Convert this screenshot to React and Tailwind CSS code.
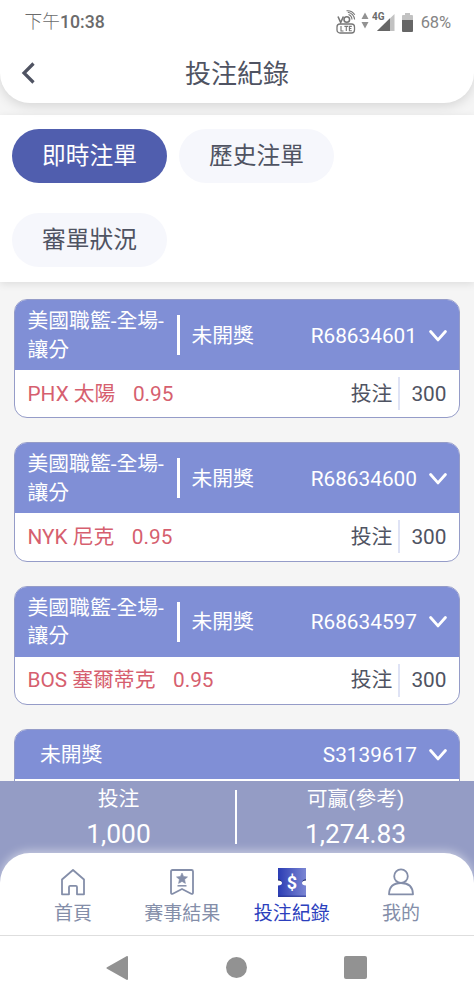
import React from 'react';

const tabs = [
  { label: '即時注單', active: true },
  { label: '歷史注單', active: false },
  { label: '審單狀況', active: false },
];

const bets = [
  { id: 'R68634601', game: '美國職籃-全場-讓分', team: 'PHX 太陽', odds: '0.95', stake: 300 },
  { id: 'R68634600', game: '美國職籃-全場-讓分', team: 'NYK 尼克', odds: '0.95', stake: 300 },
  { id: 'R68634597', game: '美國職籃-全場-讓分', team: 'BOS 塞爾蒂克', odds: '0.95', stake: 300 },
];

const Chevron = () => (
  <svg width="18" height="13" viewBox="0 0 18 13" fill="none" stroke="#fff" strokeWidth="2.8" strokeLinecap="round" strokeLinejoin="round">
    <path d="M1.6 2.500 9 10.900 16.400 2.500" />
  </svg>
);

const StatusBar = () => (
  <div className="flex h-[44px] items-center justify-between pl-[24.500px] pr-[23px] text-[#6b6b6b]">
    <span className="pt-px text-[17.700px] leading-none font-medium">
      <span className="font-light">下午</span>10:38
    </span>
    <div className="flex items-center">
      <svg width="20" height="25" viewBox="0 0 20 25" className="mr-[5px]" fill="none" stroke="#777">
        <path d="M2 6.500 4.700 12.500 7.400 6.500" strokeWidth="1.6" />
        <circle cx="10.800" cy="9.500" r="2.800" strokeWidth="1.6" />
        <path d="M12.500 4.500q3.300 1.200 3.500 5M11.800 2.300q6 1.200 6.800 7.200M10.500.8q5.500-.5 8.300 4" strokeWidth="1.1" />
        <rect x="1" y="14" width="17.500" height="9" rx="3" strokeWidth="1.300" />
        <path d="M5 16v5h2.500M8.400 16.400h3.800M10.300 16v5M15.800 16.400h-2.400v4.300h2.400M13.400 18.500h2" strokeWidth="1.1" />
      </svg>
      <svg width="8" height="17" viewBox="0 0 8 17" className="mr-[3px] mb-[3px]" fill="#929292">
        <path d="M4 .5 7.500 7H.5zM4 16.500.5 10h7z" />
      </svg>
      <svg width="24" height="22" viewBox="0 0 24 22" className="mr-[6px]">
        <path d="M22.500 3v17H5z" fill="#c2c2c2" />
        <path d="M18 7.300V20H5z" fill="#666" />
        <text x="0" y="9" fontSize="10" fontWeight="700" fill="#6b6b6b" stroke="#fff" strokeWidth="1.500" paintOrder="stroke">4G</text>
      </svg>
      <svg width="11" height="19" viewBox="0 0 11 19" className="mr-[8px]">
        <path d="M3 0h5v2h2q1 0 1 1v5H0V3q0-1 1-1h2z" fill="#c2c2c2" />
        <path d="M0 7h11v11q0 1-1 1H1q-1 0-1-1z" fill="#666" />
      </svg>
      <span className="pt-[2px] text-[16.500px] leading-none tracking-[-0.1px] text-[#858585]">68%</span>
    </div>
  </div>
);

const BetCard = ({ bet }) => (
  <div className="h-[119.200px] shrink-0 overflow-hidden rounded-[13px] border border-[#959cc8] bg-white">
    <div className="flex h-[70px] items-center bg-[#808fd6] pl-[12.500px] pr-[12.500px] text-white">
      <div className="w-[140px] pt-px leading-[28.500px] break-all">{bet.game}</div>
      <div className="ml-[9px] h-10 w-[3px] bg-white" />
      <span className="ml-[12px] pt-[2px]">未開獎</span>
      <span className="ml-auto mr-[11.500px] pt-[2px]">{bet.id}</span>
      <Chevron />
    </div>
    <div className="flex h-[47.200px] items-center pl-[12.500px] pr-[12.500px]">
      <span className="pt-px text-[#d65f6f]">{bet.team}</span>
      <span className="ml-[17.500px] pt-px text-[#d65f6f]">{bet.odds}</span>
      <span className="ml-auto pt-px">投注</span>
      <div className="mr-[11px] ml-[6px] h-[33px] w-[2px] bg-[#dfe3f5]" />
      <span className="pt-px">{bet.stake}</span>
    </div>
  </div>
);

const HomeIcon = () => (
  <svg width="26" height="28" viewBox="0 0 26 28" fill="none" stroke="#848ea9" strokeWidth="1.8" strokeLinejoin="round">
    <path d="M2 11.500 13 2l11 9.500V26.300h-7V19q0-1.200-1.200-1.200h-5.600Q9 17.800 9 19v7.300H2z" />
  </svg>
);

const ResultIcon = () => (
  <svg width="26" height="28" viewBox="0 0 26 28" fill="none" stroke="#848ea9" strokeWidth="1.8" strokeLinejoin="round">
    <path d="M3.500 2h19q1.500 0 1.500 1.500v21q0 2-1.800 1.200L13 21l-9.200 4.700Q2 26.500 2 24.500v-21Q2 2 3.500 2z" />
    <path d="m13 5 1.600 3.500 3.900.4-2.900 2.600.8 3.900-3.400-2-3.400 2 .8-3.900-2.900-2.600 3.900-.4z" fill="#848ea9" strokeWidth=".6" />
    <path d="M8.500 17.800h9" strokeWidth="1.500" />
  </svg>
);

const TicketIcon = () => (
  <svg width="28" height="30" viewBox="0 0 28 30">
    <defs>
      <linearGradient id="ticket" x1="0" x2="1" y1="0" y2="0">
        <stop offset="0" stopColor="#2b3db4" />
        <stop offset="1" stopColor="#7b86d3" />
      </linearGradient>
    </defs>
    <path d="M0 0h28v29H0z" fill="url(#ticket)" />
    <path d="M0 27.500h28V29H0z" fill="#26348f" opacity=".6" />
    <path d="M0 11.300q3 0 4 3.200H0zM28 11.300q-3 0-4 3.200h4z" fill="#222c68" />
    <path d="M0 12.500q4 .3 4 2.500t-4 2.500zM28 12.500q-4 .3-4 2.500t4 2.500z" fill="#fff" />
    <text x="14" y="20.500" textAnchor="middle" fontSize="18" fontWeight="700" fill="#fff">$</text>
  </svg>
);

const UserIcon = () => (
  <svg width="26" height="28" viewBox="0 0 26 28" fill="none" stroke="#848ea9" strokeWidth="1.8" strokeLinejoin="round">
    <circle cx="13" cy="8.200" r="6.800" />
    <path d="M1 26.300q.3-11.300 12-11.300t12 11.300z" />
  </svg>
);

const navItems = [
  { label: '首頁', Icon: HomeIcon },
  { label: '賽事結果', Icon: ResultIcon },
  { label: '投注紀錄', Icon: TicketIcon, active: true },
  { label: '我的', Icon: UserIcon },
];

const App = () => {
  return (
    <div className="flex h-[1000px] w-full flex-col overflow-hidden bg-[#f5f5f5] font-['Roboto','Noto_Sans_CJK_TC',sans-serif] text-[20.800px] leading-none text-[#4f5362]">
      <header className="relative z-10 h-[102.500px] shrink-0 rounded-b-[30px] bg-white shadow-[0_3px_12px_rgba(0,0,0,0.13)]">
        <StatusBar />
        <div className="grid h-[58px] grid-cols-[1fr_auto_1fr] items-center">
          <svg width="14" height="22" viewBox="0 0 14 22" className="ml-[21px]" fill="none" stroke="#4f5362" strokeWidth="3.200">
            <path d="M12.500 1.500 3 11l9.500 9.500" />
          </svg>
          <h1 className="pt-[2px] text-[26px]">投注紀錄</h1>
        </div>
      </header>

      <div className="mt-[12px] flex h-[167px] shrink-0 flex-wrap content-start gap-x-[12px] gap-y-[30px] bg-white px-[12px] pt-[14.500px] shadow-[0_2px_8px_rgba(0,0,0,0.1)]">
        {tabs.map((tab) => (
          <button
            key={tab.label}
            className={`h-[54px] w-[155px] rounded-full pt-px text-[23.700px] ${
              tab.active ? 'bg-[#505eae] text-white' : 'bg-[#f6f7fc] text-[#4f5362]'
            }`}
          >
            {tab.label}
          </button>
        ))}
      </div>

      <main className="flex h-[499.500px] shrink-0 flex-col gap-[24.200px] overflow-hidden px-[14px] pt-[17.500px]">
        {bets.map((bet) => (
          <BetCard key={bet.id} bet={bet} />
        ))}
        <div className="h-[119px] shrink-0 overflow-hidden rounded-t-[13px] border border-[#959cc8] bg-white">
          <div className="flex h-[49px] items-center bg-[#808fd6] pl-[25px] pr-[12.500px] text-white">
            <span className="pt-[2px]">未開獎</span>
            <span className="ml-auto mr-[11.500px] pt-px">S3139617</span>
            <Chevron />
          </div>
        </div>
      </main>

      <div className="flex h-[112px] shrink-0 bg-[#949cc5] text-center text-white">
        <div className="w-[235px] pt-[8px] pl-[2px]">
          <div>投注</div>
          <div className="mt-[11px] text-[26.400px]">1,000</div>
        </div>
        <div className="mt-[9px] h-[54px] w-[2px] bg-white" />
        <div className="flex-1 pt-[8px]">
          <div>可贏(參考)</div>
          <div className="mt-[11px] text-[26.400px]">1,274.83</div>
        </div>
      </div>

      <nav className="relative z-10 -mt-[40px] flex h-[83px] shrink-0 justify-center rounded-t-[30px] border-b border-[#dedede] bg-white pt-[15px] shadow-[0_-2px_10px_rgba(255,255,255,0.5)]">
        {navItems.map(({ label, Icon, active }) => (
          <div key={label} className="flex w-[109.300px] shrink-0 flex-col items-center">
            <div className="h-[30px]">
              <Icon />
            </div>
            <span className={`mt-[6px] text-[19px] whitespace-nowrap ${active ? 'text-[#2c3fbd]' : 'text-[#848ea9]'}`}>{label}</span>
          </div>
        ))}
      </nav>

      <div className="flex flex-1 items-center justify-between bg-white pr-[107px] pb-px pl-[106px]">
        <svg width="22" height="24" viewBox="0 0 22 24" fill="#929292" stroke="#929292" strokeWidth="2" strokeLinejoin="round">
          <path d="M21 1v22L1.500 12z" />
        </svg>
        <div className="size-[21px] rounded-full bg-[#929292]" />
        <div className="size-[23px] rounded-[2px] bg-[#929292]" />
      </div>
    </div>
  );
};

export default App;
